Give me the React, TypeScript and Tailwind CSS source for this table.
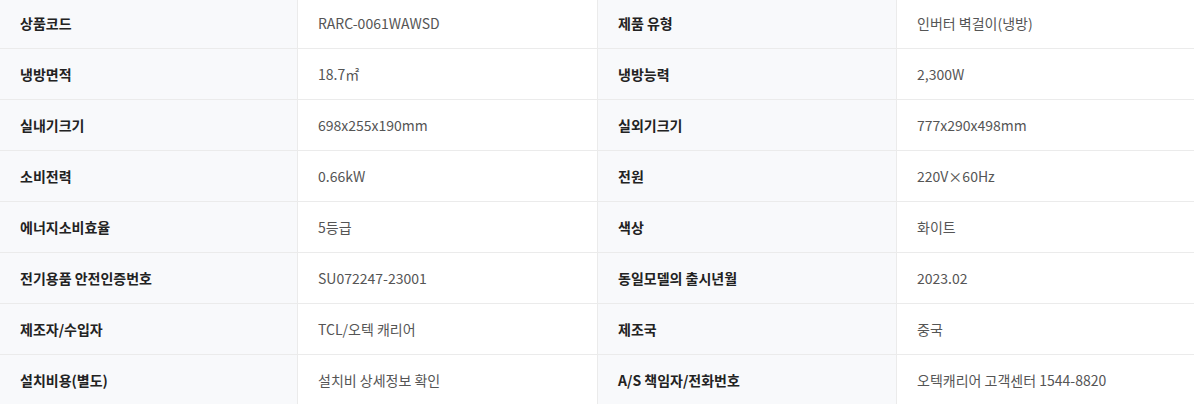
import React from 'react';

const ROWS: [string, string, string, string][] = [
  ['상품코드', 'RARC-0061WAWSD', '제품 유형', '인버터 벽걸이(냉방)'],
  ['냉방면적', '18.7㎡', '냉방능력', '2,300W'],
  ['실내기크기', '698x255x190mm', '실외기크기', '777x290x498mm'],
  ['소비전력', '0.66kW', '전원', '220V×60Hz'],
  ['에너지소비효율', '5등급', '색상', '화이트'],
  ['전기용품 안전인증번호', 'SU072247-23001', '동일모델의 출시년월', '2023.02'],
  ['제조자/수입자', 'TCL/오텍 캐리어', '제조국', '중국'],
  ['설치비용(별도)', '설치비 상세정보 확인', 'A/S 책임자/전화번호', '오텍캐리어 고객센터 1544-8820'],
];

const Label = ({ children, first }: { children: React.ReactNode; first?: boolean }) => (
  <div
    className={`flex items-center h-[50px] px-5 bg-[#f8f9fb] text-[14px] font-bold text-[#222] ${
      first ? '' : 'border-l border-[#ebebeb]'
    }`}
  >
    {children}
  </div>
);

const Value = ({ children }: { children: React.ReactNode }) => (
  <div className="flex items-center h-[50px] px-5 bg-white border-l border-[#ebebeb] text-[14px] text-[#555]">
    {children}
  </div>
);

export default function App() {
  return (
    <div
      className="w-[1194px] h-[404px] overflow-hidden bg-white"
      style={{ fontFamily: '"Noto Sans CJK KR", "Noto Sans", sans-serif' }}
    >
      <div className="-mt-[2px]">
        {ROWS.map(([l1, v1, l2, v2], i) => (
          <div
            key={i}
            className="grid grid-cols-[297px_300px_299px_1fr] border-b border-[#ebebeb]"
          >
            <Label first>{l1}</Label>
            <Value>{v1}</Value>
            <Label>{l2}</Label>
            <Value>{v2}</Value>
          </div>
        ))}
      </div>
    </div>
  );
}
